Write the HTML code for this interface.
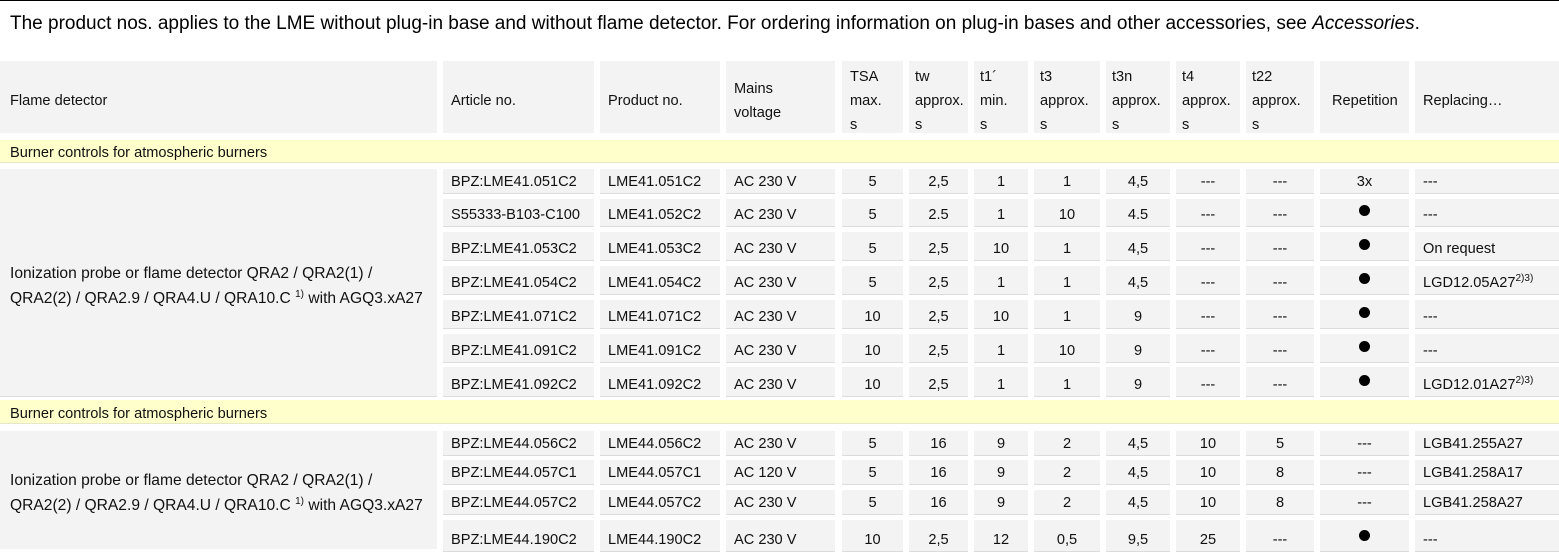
<!DOCTYPE html>
<html><head><meta charset="utf-8"><style>
*{box-sizing:border-box;margin:0;padding:0}
body{width:1559px;height:549px;overflow:hidden;background:#fff;font-family:"Liberation Sans",Arial,sans-serif;color:#111;font-size:14.6px;position:relative}
.top{position:absolute;left:0;top:0;width:1559px;height:1px;background:#000}
.intro{position:absolute;left:10px;top:13px;font-size:19px;line-height:22px;color:#000;white-space:nowrap}
.c{position:absolute;background:#f3f3f3;border-bottom:1px solid #dcdcdc;padding:0 0 2px 8px;display:flex;align-items:flex-end;white-space:nowrap;line-height:17px}
.n{justify-content:center;padding-left:0}
.h{position:absolute;background:#f3f3f3;top:61px;height:72px;padding-left:8px;padding-top:8px;display:flex;align-items:center;line-height:24px}
.y{position:absolute;left:0;width:1559px;background:#ffffcc;border-bottom:1px solid #e6e6c8;padding-left:10px;display:flex;align-items:flex-end;padding-bottom:0;line-height:17px}
.big{position:absolute;left:0;width:437px;background:#f3f3f3;border-bottom:1px solid #dcdcdc;padding-left:10px;padding-top:6px;display:flex;align-items:center;line-height:25px;font-size:15.6px;white-space:nowrap}
sup{font-size:10px;line-height:0;vertical-align:6px}
.dot{display:inline-block;width:11px;height:11px;border-radius:50%;background:#000;margin-bottom:3px}
</style></head><body>
<div class="top"></div>
<div class="intro">The product nos. applies to the LME without plug-in base and without flame detector. For ordering information on plug-in bases and other accessories, see <i>Accessories</i>.</div>

<div class="h" style="left:0;width:437px;padding-left:10px">Flame detector</div>
<div class="h" style="left:443px;width:151px">Article no.</div>
<div class="h" style="left:600px;width:120px">Product no.</div>
<div class="h" style="left:726px;width:109px"><div>Mains<br>voltage</div></div>
<div class="h" style="left:842px;width:61px"><div>TSA<br>max.<br>s</div></div>
<div class="h" style="left:909px;width:59px;padding-left:6px"><div>tw<br>approx.<br>s</div></div>
<div class="h" style="left:974px;width:54px;padding-left:6px"><div>t1´<br>min.<br>s</div></div>
<div class="h" style="left:1034px;width:66px;padding-left:6px"><div>t3<br>approx.<br>s</div></div>
<div class="h" style="left:1106px;width:64px;padding-left:6px"><div>t3n<br>approx.<br>s</div></div>
<div class="h" style="left:1176px;width:64px;padding-left:6px"><div>t4<br>approx.<br>s</div></div>
<div class="h" style="left:1246px;width:68px;padding-left:6px"><div>t22<br>approx.<br>s</div></div>
<div class="h" style="left:1320px;width:89px;padding-left:12px">Repetition</div>
<div class="h" style="left:1415px;width:144px">Replacing…</div>

<div class="y" style="top:140px;height:23px">Burner controls for atmospheric burners</div>
<div class="big" style="top:169px;height:228px"><div>Ionization probe or flame detector QRA2 / QRA2(1) /<br>QRA2(2) / QRA2.9 / QRA4.U / QRA10.C <sup>1)</sup>&nbsp;with AGQ3.xA27</div></div>

<div class="y" style="top:400px;height:24px">Burner controls for atmospheric burners</div>
<div class="big" style="top:431px;height:118px;border-bottom:none"><div>Ionization probe or flame detector QRA2 / QRA2(1) /<br>QRA2(2) / QRA2.9 / QRA4.U / QRA10.C <sup>1)</sup>&nbsp;with AGQ3.xA27</div></div>

<div id="rows"></div>
<script>
var cols=[[443,151,0],[600,120,0],[726,109,0],[842,61,1],[909,59,1],[974,54,1],[1034,66,1],[1106,64,1],[1176,64,1],[1246,68,1],[1320,89,1],[1415,144,0]];
var D='<span class="dot"></span>';
var rows=[
[169,25,['BPZ:LME41.051C2','LME41.051C2','AC 230 V','5','2,5','1','1','4,5','---','---','3x','---']],
[199,28,['S55333-B103-C100','LME41.052C2','AC 230 V','5','2.5','1','10','4.5','---','---',D,'---']],
[232,29,['BPZ:LME41.053C2','LME41.053C2','AC 230 V','5','2,5','10','1','4,5','---','---',D,'On request']],
[266,29,['BPZ:LME41.054C2','LME41.054C2','AC 230 V','5','2,5','1','1','4,5','---','---',D,'LGD12.05A27<sup>2)3)</sup>']],
[300,29,['BPZ:LME41.071C2','LME41.071C2','AC 230 V','10','2,5','10','1','9','---','---',D,'---']],
[334,29,['BPZ:LME41.091C2','LME41.091C2','AC 230 V','10','2,5','1','10','9','---','---',D,'---']],
[367,30,['BPZ:LME41.092C2','LME41.092C2','AC 230 V','10','2,5','1','1','9','---','---',D,'LGD12.01A27<sup>2)3)</sup>']],
[431,25,['BPZ:LME44.056C2','LME44.056C2','AC 230 V','5','16','9','2','4,5','10','5','---','LGB41.255A27']],
[460,25,['BPZ:LME44.057C1','LME44.057C1','AC 120 V','5','16','9','2','4,5','10','8','---','LGB41.258A17']],
[490,25,['BPZ:LME44.057C2','LME44.057C2','AC 230 V','5','16','9','2','4,5','10','8','---','LGB41.258A27']],
[520,32,['BPZ:LME44.190C2','LME44.190C2','AC 230 V','10','2,5','12','0,5','9,5','25','---',D,'---']]
];
var h='';
rows.forEach(function(r){r[2].forEach(function(t,i){var c=cols[i];
h+='<div class="c'+(c[2]?' n':'')+'" style="left:'+c[0]+'px;top:'+r[0]+'px;width:'+c[1]+'px;height:'+r[1]+'px"><span>'+t+'</span></div>';});});
document.getElementById('rows').innerHTML=h;
</script>
</body></html>
